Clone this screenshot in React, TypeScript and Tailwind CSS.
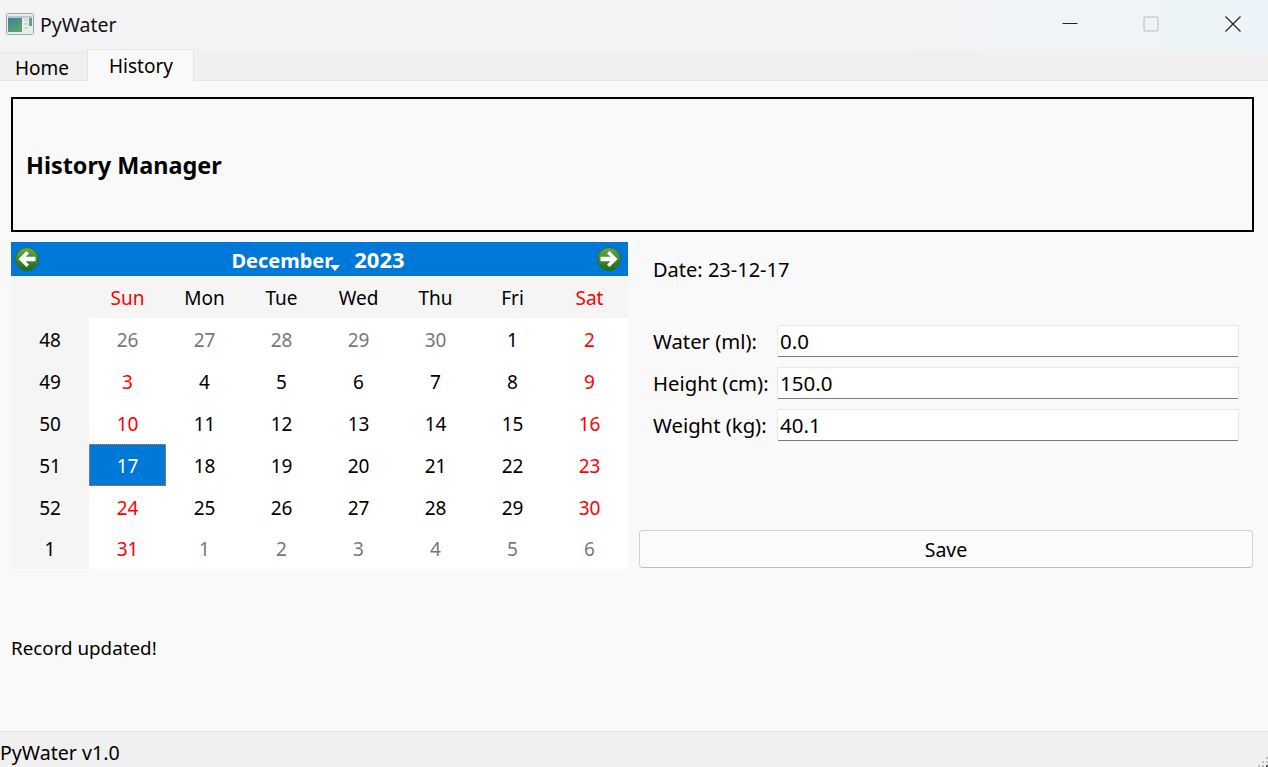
const WEEKS: [number, number[]][] = [
  [48, [26, 27, 28, 29, 30, 1, 2]],
  [49, [3, 4, 5, 6, 7, 8, 9]],
  [50, [10, 11, 12, 13, 14, 15, 16]],
  [51, [17, 18, 19, 20, 21, 22, 23]],
  [52, [24, 25, 26, 27, 28, 29, 30]],
  [1, [31, 1, 2, 3, 4, 5, 6]],
];
const DAYS = ["Sun", "Mon", "Tue", "Wed", "Thu", "Fri", "Sat"];

function Arrow({ right }: { right?: boolean }) {
  const id = right ? "gr" : "gl";
  return (
    <svg width="24" height="24" viewBox="0 0 24 24" className={right ? "scale-x-[-1]" : ""}>
      <defs>
        <linearGradient id={id} x1="0" y1="0" x2="0" y2="1">
          <stop offset="0" stopColor="#6aa84f" />
          <stop offset="1" stopColor="#1f6b14" />
        </linearGradient>
      </defs>
      <circle cx="12" cy="12" r="11.5" fill={`url(#${id})`} stroke="#2f6b2a" strokeWidth="1" />
      <path d="M3.5 12 L11.5 4 L14 6.5 L10.5 9.8 H20.5 V14.2 H10.5 L14 17.5 L11.5 20 Z" fill="#fff" />
    </svg>
  );
}

function Field({ label, value }: { label: string; value: string }) {
  return (
    <div className="flex items-center h-8">
      <span className="w-[125px] shrink-0 text-[20.3px]">{label}</span>
      <div className="w-[462px] h-8 flex items-center pl-[2px] text-[20.5px] bg-white border border-[#e8e8e8] border-b-[#7a7a7a] rounded-[2px] -ml-px">{value}</div>
    </div>
  );
}

export default function App() {
  return (
    <div className="w-[1268px] h-[767px] flex flex-col overflow-hidden bg-[#f9f9f9] text-black text-[19px] font-['Noto_Sans','Open_Sans',sans-serif]">
      <div className="h-[50px] flex items-center bg-gradient-to-r from-[#f3f3f5] from-70% to-[#ebf4f8]">
        <svg width="28" height="22" viewBox="0 0 28 22" className="ml-[6px] mb-[3px]">
          <rect x="0.5" y="0.5" width="27" height="21" rx="1" fill="#e8ecec" stroke="#a5a5a5" />
          <rect x="2" y="3" width="24" height="2" fill="#b8c8cc" />
          <defs>
            <linearGradient id="ic" x1="0" y1="0" x2="0.6" y2="1">
              <stop offset="0" stopColor="#3b7f9f" />
              <stop offset="1" stopColor="#5aa56a" />
            </linearGradient>
          </defs>
          <rect x="2" y="5" width="14" height="14" fill="url(#ic)" />
          <rect x="18" y="6" width="4" height="2" fill="#cfd6d6" />
          <rect x="18" y="10" width="4" height="2" fill="#cfd6d6" />
          <rect x="18" y="14" width="4" height="2" fill="#cfd6d6" />
          <rect x="23" y="5" width="3" height="8" fill="#5f9f96" />
        </svg>
        <span className="ml-[6px] text-[19.5px] text-[#111]">PyWater</span>
        <div className="ml-auto flex items-center mb-[2px]">
          <svg width="16" height="16" viewBox="0 0 16 16" className="mr-[65px]"><path d="M0.5 7.5H15.5" stroke="#222" strokeWidth="1" /></svg>
          <svg width="16" height="16" viewBox="0 0 16 16" className="mr-[66px]"><rect x="1" y="1" width="14" height="14" rx="2" fill="none" stroke="#c9cdd0" strokeWidth="1.5" /></svg>
          <svg width="16" height="16" viewBox="0 0 16 16" className="mr-[27px]"><path d="M0.5 0.5L15.5 15.5M15.5 0.5L0.5 15.5" stroke="#222" strokeWidth="1.2" /></svg>
        </div>
      </div>

      <div className="h-[31px] flex items-end bg-[#f0f0f0] border-b border-[#e5e5e5] relative">
        <div className="w-[87px] h-[28px] flex items-center justify-center border-t border-[#e8e8e8] -mb-px pt-[2px] pr-[3px]">Home</div>
        <div className="w-[107px] h-[32px] flex items-center justify-center bg-[#f9f9f9] border border-b-0 border-[#e5e5e5] -mb-px pl-px pt-[2px]">History</div>
      </div>

      <div className="flex-1 flex flex-col px-[11px] pt-[16px] pr-[14px]">
        <div className="h-[135px] flex items-center border-2 border-black pl-[13px] pt-[2px] font-bold text-[23.4px]">History Manager</div>

        <div className="mt-[10px] flex gap-[11px]">
          <div className="w-[617px] shrink-0">
            <div className="h-[34px] bg-[#0078d7] flex items-center justify-between pl-[4px] pr-[7px]">
              <Arrow />
              <div className="flex items-baseline text-white font-bold text-[20px]">
                <span className="relative">December<span className="absolute -right-[7px] bottom-[5px] w-0 h-0 border-l-[5px] border-r-[5px] border-t-[6px] border-l-transparent border-r-transparent border-t-white" /></span>
                <span className="ml-[21px] text-[22px]">2023</span>
              </div>
              <Arrow right />
            </div>
            <div className="grid grid-cols-[78px_repeat(7,77px)] h-[42px] bg-[#f5f5f5] items-center text-center pt-[2px]">
              <span />
              {DAYS.map((d, i) => (
                <span key={d} className={i === 0 || i === 6 ? "text-[#ff0000]" : ""}>{d}</span>
              ))}
            </div>
            {WEEKS.map(([w, ds], r) => (
              <div key={r} className={`grid grid-cols-[78px_repeat(7,77px)] items-center text-center bg-white ${r === 5 ? "h-[41px]" : "h-[42px]"}`}>
                <span className="h-full flex items-center justify-center bg-[#f5f5f5] pt-[2px]">{w}</span>
                {ds.map((d, i) => {
                  const other = (r === 0 && i < 5) || (r === 5 && i > 0);
                  const red = !other && (i === 0 || i === 6);
                  const sel = r === 3 && i === 0;
                  return (
                    <span
                      key={i}
                      className={
                        sel
                          ? "h-full flex items-center justify-center pt-[2px] bg-[#0078d7] text-white border border-dotted border-[#f08020]"
                          : `h-full flex items-center justify-center pt-[2px] ${other ? "text-[#787878]" : red ? "text-[#ff0000]" : ""}`
                      }
                    >
                      {d}
                    </span>
                  );
                })}
              </div>
            ))}
          </div>

          <div className="flex-1 flex flex-col">
            <div className="pl-[14px] h-[56px] flex items-center text-[20px]">Date: 23-12-17</div>
            <div className="mt-[27px] pl-[14px] flex flex-col gap-[10px]">
              <Field label="Water (ml):" value="0.0" />
              <Field label="Height (cm):" value="150.0" />
              <Field label="Weight (kg):" value="40.1" />
            </div>
            <div className="mt-[89px] h-[38px] w-[614px] flex items-center justify-center bg-[#fbfbfb] border border-[#d0d0d0] border-b-[#bdbdbd] rounded-[4px] pt-[2px] text-[19.5px]">Save</div>
          </div>
        </div>

        <div className="mt-[65px] text-[18.8px]">Record updated!</div>
      </div>

      <div className="h-[36px] flex items-center bg-[#f0f0f0] border-t border-[#e5e5e5] relative pt-[7px]">
        <span className="text-[19.6px]">PyWater v1.0</span>
        <svg width="10" height="10" viewBox="0 0 10 10" className="absolute right-0 bottom-0">
          <rect x="8" y="0" width="2" height="2" fill="#bbb" />
          <rect x="4" y="4" width="2" height="2" fill="#bbb" />
          <rect x="8" y="4" width="2" height="2" fill="#bbb" />
          <rect x="0" y="8" width="2" height="2" fill="#bbb" />
          <rect x="4" y="8" width="2" height="2" fill="#bbb" />
          <rect x="8" y="8" width="2" height="2" fill="#555" />
        </svg>
      </div>
    </div>
  );
}
